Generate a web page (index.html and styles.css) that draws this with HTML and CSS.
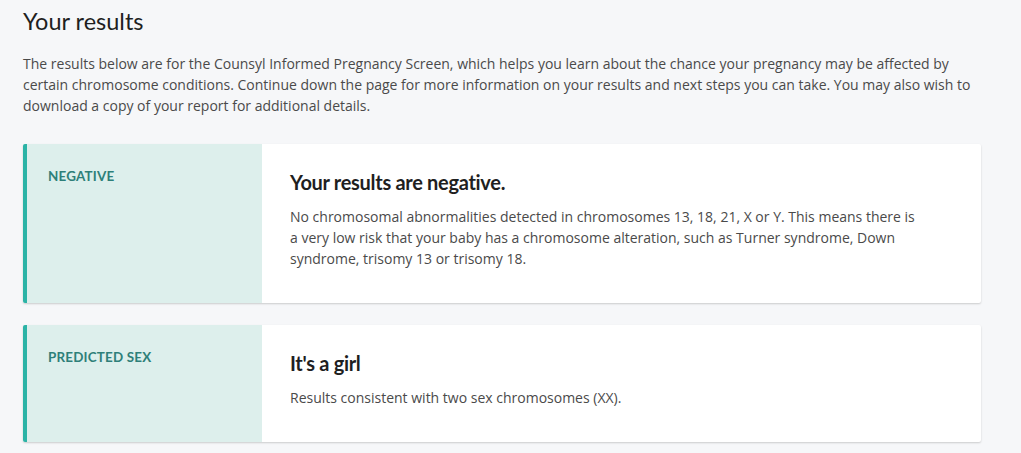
FILE: index.html
```html
<!DOCTYPE html>
<html>
<head>
<meta charset="utf-8">
<link rel="stylesheet" href="styles.css">
</head>
<body>
<main class="page">
  <h1 class="page-title">Your results</h1>
  <p class="intro">The results below are for the Counsyl Informed Pregnancy Screen, which helps you learn about the chance your pregnancy may be affected by certain chromosome conditions. Continue down the page for more information on your results and next steps you can take. You may also wish to download a copy of your report for additional details.</p>
  <section class="card">
    <div class="card-label">NEGATIVE</div>
    <div class="card-body">
      <h2 class="card-title">Your results are negative.</h2>
      <p class="card-text">No chromosomal abnormalities detected in chromosomes 13, 18, 21, X or Y. This means there is a very low risk that your baby has a chromosome alteration, such as Turner syndrome, Down syndrome, trisomy 13 or trisomy 18.</p>
    </div>
  </section>
  <section class="card">
    <div class="card-label">PREDICTED SEX</div>
    <div class="card-body">
      <h2 class="card-title">It's a girl</h2>
      <p class="card-text">Results consistent with two sex chromosomes (XX).</p>
    </div>
  </section>
</main>
</body>
</html>
```

FILE: styles.css
```css
html, body {
  margin: 0;
  padding: 0;
  background: #f6f7f9;
}
.page {
  padding: 4px 40px 0 23px;
  font-family: "Open Sans", "Liberation Sans", sans-serif;
  color: #4a4a4a;
}
.page-title {
  margin: 0;
  font-family: Lato, "Liberation Sans", sans-serif;
  font-weight: 400;
  font-size: 23.5px;
  line-height: 34px;
  color: #1f1f1f;
}
.intro {
  margin: 15px 0 28px;
  font-size: 14px;
  line-height: 21px;
  color: #4a4a4a;
  max-width: 960px;
}
.card {
  display: flex;
  width: 958px;
  margin-bottom: 22px;
  background: #fff;
  border-radius: 2px;
  box-shadow: 0 1px 2px rgba(0,0,0,0.18);
  overflow: hidden;
}
.card-label {
  flex: 0 0 214px;
  background: #ddefec;
  border-left: 4px solid #2bb3a6;
  padding: 24px 0 0 21px;
  font-family: Lato, "Liberation Sans", sans-serif;
  font-weight: 700;
  font-size: 13.4px;
  line-height: 16px;
  color: #2e7f79;
  letter-spacing: 0.2px;
}
.card-body {
  flex: 1;
  padding: 24px 60px 34px 28px;
}
.card-title {
  margin: 0 0 10px;
  font-family: Lato, "Liberation Sans", sans-serif;
  font-weight: 700;
  font-size: 20px;
  line-height: 28px;
  letter-spacing: -0.3px;
  color: #1f1f1f;
}
.card-text {
  margin: 0;
  font-size: 14px;
  line-height: 21px;
  max-width: 630px;
}
```
